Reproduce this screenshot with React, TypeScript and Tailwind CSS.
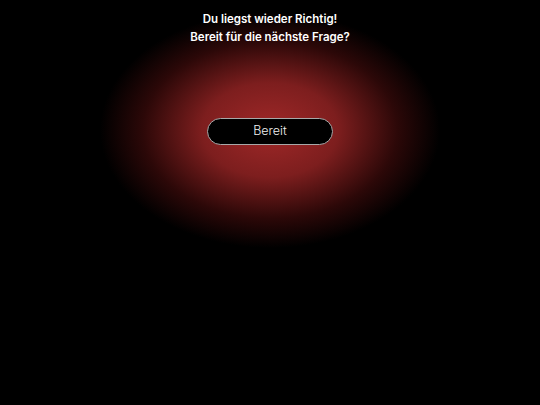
const App = () => {
  return (
    <div
      className="min-h-[405px] w-full bg-black bg-[radial-gradient(ellipse_170px_118px_at_270px_130px,#a02828_0%,#7d1e1e_40%,#2c0808_75%,#000_100%)] flex flex-col items-center pt-[10px]"
      style={{ fontFamily: '"Inter", "Noto Sans", sans-serif' }}
    >
      <div className="text-center text-white text-[11.5px] font-semibold leading-[18px]">
        <p>Du liegst wieder Richtig!</p>
        <p>Bereit für die nächste Frage?</p>
      </div>
      <button className="mt-[72px] w-[126px] h-[27px] rounded-full bg-black border border-[#a8a8a8] text-[#f0f0f0] text-[12.5px] font-light">
        Bereit
      </button>
    </div>
  );
};

export default App;
